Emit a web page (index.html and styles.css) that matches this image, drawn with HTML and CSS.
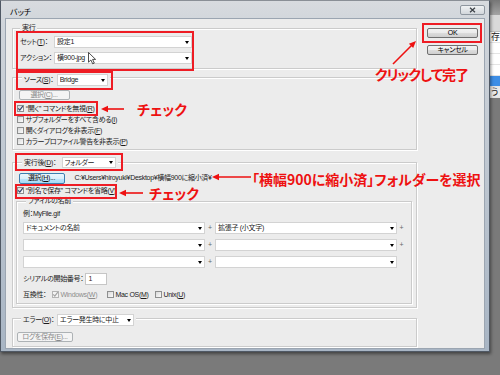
FILE: index.html
```html
<!DOCTYPE html>
<html lang="ja">
<head>
<meta charset="utf-8">
<title>バッチ</title>
<link rel="stylesheet" href="styles.css">
</head>
<body>
<div class="backapp">
  <div class="ba-top"></div>
  <div class="ba-bar"></div>
  <div class="ba-row ba-txt">存</div>
  <div class="ba-row"></div>
  <div class="ba-row"></div>
  <div class="ba-row"></div>
  <div class="ba-row ba-sel"></div>
  <div class="ba-row ba-txt ba-ico">う</div>
</div>

<div class="window">
  <div class="titlebar">
    <span class="title">バッチ</span>
    <span class="close-btn"><svg width="7" height="6" viewBox="0 0 7 6"><path d="M1 0.8 L6 5.2 M6 0.8 L1 5.2" stroke="#3d4248" stroke-width="1.3" fill="none"/></svg></span>
  </div>
  <div class="client">
    <div class="main-col">
      <fieldset class="group g-run">
        <legend class="lg-text">実行</legend>
        <div class="frow">
          <span class="flabel w-run">セット(<u>T</u>)：</span>
          <span class="select s-run"><span class="val">設定1</span><i class="arr"></i></span>
        </div>
        <div class="frow">
          <span class="flabel w-run">アクション：</span>
          <span class="select s-run"><span class="val">横900-jpg</span><i class="arr"></i></span>
        </div>
      </fieldset>

      <fieldset class="group g-src">
        <legend class="lg-ctrl lg-src">
          <span class="flabel w-src">ソース(<u>S</u>)：</span>
          <span class="select s-src"><span class="val">Bridge</span><i class="arr"></i></span>
        </legend>
        <span class="btn disabled b-choose1">選択(<u>C</u>)...</span>
        <div class="cb-list">
          <div class="cb-row"><span class="cb"><svg class="chk" viewBox="0 0 7 7"><path d="M1.2 3.4 L2.8 5.1 L5.8 1.2"/></svg></span><span>“開く” コマンドを無視(<u>R</u>)</span></div>
          <div class="cb-row"><span class="cb"></span><span>サブフォルダーをすべて含める(<u>I</u>)</span></div>
          <div class="cb-row"><span class="cb"></span><span>開くダイアログを非表示(<u>F</u>)</span></div>
          <div class="cb-row"><span class="cb"></span><span>カラープロファイル警告を非表示(<u>P</u>)</span></div>
        </div>
      </fieldset>

      <fieldset class="group g-after">
        <legend class="lg-ctrl lg-after">
          <span class="flabel w-after">実行後(<u>D</u>)：</span>
          <span class="select s-after"><span class="val">フォルダー</span><i class="arr"></i></span>
        </legend>
        <div class="path-row">
          <span class="btn hot b-choose2">選択(<u>H</u>)...</span>
          <span class="path">C:¥Users¥hiroyuki¥Desktop¥横幅900に縮小済¥</span>
        </div>
        <div class="cb-row cb-saveas"><span class="cb"><svg class="chk" viewBox="0 0 7 7"><path d="M1.2 3.4 L2.8 5.1 L5.8 1.2"/></svg></span><span>“別名で保存” コマンドを省略(<u>V</u>)</span></div>

        <fieldset class="group g-name">
          <legend class="lg-name">ファイルの名前</legend>
          <div class="example">例：MyFile.gif</div>
          <div class="name-row">
            <span class="select s-name"><span class="val">ドキュメントの名前</span><i class="arr"></i></span>
            <span class="plus">+</span>
            <span class="select s-name"><span class="val">拡張子 (小文字)</span><i class="arr"></i></span>
            <span class="plus">+</span>
          </div>
          <div class="name-row">
            <span class="select s-name"><span class="val"></span><i class="arr"></i></span>
            <span class="plus">+</span>
            <span class="select s-name"><span class="val"></span><i class="arr"></i></span>
            <span class="plus">+</span>
          </div>
          <div class="name-row">
            <span class="select s-name"><span class="val"></span><i class="arr"></i></span>
            <span class="plus">+</span>
            <span class="select s-name"><span class="val"></span><i class="arr"></i></span>
            <span class="plus"></span>
          </div>
          <div class="serial-row">
            <span class="flabel w-serial">シリアルの開始番号：</span>
            <span class="tinput">1</span>
          </div>
          <div class="compat-row">
            <span class="flabel w-compat">互換性：</span>
            <span class="citem c-win disabled"><span class="cb"><svg class="chk" viewBox="0 0 7 7"><path d="M1.2 3.4 L2.8 5.1 L5.8 1.2"/></svg></span><span>Windows(<u>W</u>)</span></span>
            <span class="citem c-mac"><span class="cb"></span><span>Mac OS(<u>M</u>)</span></span>
            <span class="citem"><span class="cb"></span><span>Unix(<u>U</u>)</span></span>
          </div>
        </fieldset>
      </fieldset>

      <fieldset class="group g-err">
        <legend class="lg-ctrl lg-err">
          <span class="flabel w-err">エラー(<u>O</u>)：</span>
          <span class="select s-err"><span class="val">エラー発生時に中止</span><i class="arr"></i></span>
        </legend>
        <span class="btn disabled b-log">ログを保存(<u>E</u>)...</span>
      </fieldset>
    </div>

    <div class="side-col">
      <span class="btn b-side b-ok">OK</span>
      <span class="btn b-side">キャンセル</span>
    </div>
  </div>
</div>

<div class="annot">
  <div class="rbox rb-a"></div>
  <div class="rbox rb-b"></div>
  <div class="rbox rb-c"></div>
  <div class="rbox rb-d"></div>
  <div class="rbox rb-e"></div>
  <div class="rbox rb-f"></div>
  <svg class="arrows" width="500" height="375" viewBox="0 0 500 375">
    <g stroke="#ee1111" stroke-width="1.6" fill="none">
      <line x1="124" y1="109" x2="107" y2="109"/>
      <line x1="143" y1="193" x2="125" y2="193"/>
      <line x1="251" y1="177" x2="218" y2="177"/>
      <line x1="393" y1="64" x2="412" y2="45"/>
    </g>
    <g fill="#ee1111">
      <polygon points="101,109 108,105.8 108,112.2"/>
      <polygon points="119,193 126,189.8 126,196.2"/>
      <polygon points="212,177 219,173.8 219,180.2"/>
      <polygon points="416,41 413.2,48.1 408.9,43.8"/>
    </g>
  </svg>
  <span class="rtext rt-1">チェック</span>
  <span class="rtext rt-2">「横幅900に縮小済」フォルダーを選択</span>
  <span class="rtext rt-3">チェック</span>
  <span class="rtext rt-4">クリックして完了</span>
  <svg class="cursor" width="9" height="13" viewBox="0 0 9 13"><path d="M0.5 0.5 L0.5 10.2 L2.9 8 L4.7 11.8 L6.3 11.1 L4.6 7.4 L7.6 7.4 Z" fill="#fff" stroke="#222" stroke-width="0.8" stroke-linejoin="round"/></svg>
</div>
</body>
</html>
```

FILE: styles.css
```css
* { box-sizing: border-box; }
html, body { margin: 0; padding: 0; }
body {
  width: 500px; height: 375px; overflow: hidden; position: relative;
  background: #7a7a7a;
  font-family: "Liberation Sans", "Noto Sans CJK JP", sans-serif;
  font-size: 7px; line-height: 10px; color: #1b1b1b;
  font-feature-settings: "palt";
  letter-spacing: -0.3px;
}
u { text-decoration: underline; text-underline-offset: 1px; }

/* background application sliver */
.backapp { position: absolute; left: 488px; top: 0; width: 12px; height: 98px; display: flex; flex-direction: column; background: #fff; }
.ba-top { height: 15px; background: linear-gradient(#767676, #a4a4a4); }
.ba-bar { height: 17px; background: #d9d9d9; border-bottom: 1px solid #bdbdbd; }
.ba-row { height: 11px; border-bottom: 1px solid #e4e4e4; }
.ba-txt { font-size: 9px; line-height: 10px; padding-left: 3px; color: #222; }
.ba-sel { background: #3d8ee6; }
.ba-ico { background: #e9e9e9; }

/* window */
.window {
  position: absolute; left: 0; top: 0; width: 490px; height: 352px;
  display: flex; flex-direction: column;
  padding: 0 4px 2px;
  border: 1px solid #4f5864; border-top-color: #8a8f96;
  background: linear-gradient(#d8dbdf 0, #d0d5db 24px, #a8b5c4 100%);
  box-shadow: 1px 2px 3px rgba(0, 0, 0, .45);
}
.titlebar { height: 17px; flex: none; display: flex; justify-content: space-between; align-items: flex-start; }
.title { margin: 8px 0 0 5px; font-size: 8px; line-height: 8px; color: #000; letter-spacing: 0; }
.close-btn {
  margin-top: 4px; width: 25px; height: 10px;
  border: 1px solid #8e969f; border-radius: 2px;
  background: linear-gradient(#f0f2f4, #d2d6db);
  display: flex; align-items: center; justify-content: center;
}
.client {
  flex: 1; display: flex; align-items: flex-start;
  background: #ececec; border: 1px solid #9ba5b1;
  padding: 4px 6px 0 6px;
}
.main-col { width: 405px; flex: none; display: flex; flex-direction: column; }
.side-col { width: 51px; margin-left: 10px; padding-top: 5px; display: flex; flex-direction: column; gap: 7px; }

/* groups */
.group {
  margin: 0; min-width: 0;
  border: 1px solid #cbcbcb;
  box-shadow: inset 1px 1px 0 #fff, 1px 1px 0 #fff;
}
legend { padding: 0 2px; background: #ececec; }
.lg-ctrl { display: flex; align-items: center; }
.lg-text { line-height: 10px; height: 10px; }

.frow { display: flex; align-items: center; height: 12px; }
.frow + .frow { margin-top: 4px; }
.flabel { flex: none; white-space: nowrap; }

.select {
  display: flex; align-items: center; flex: none;
  background: #fff; border: 1px solid #d3d3d3;
  height: 12px; padding: 0 2px 0 2px;
}
.select .val { flex: 1; white-space: nowrap; overflow: hidden; }
.arr { flex: none; width: 0; height: 0; border-left: 2.5px solid transparent; border-right: 2.5px solid transparent; border-top: 3px solid #000; }

/* group 1 */
.g-run { padding: 3px 7px 4px 7px; }
.w-run { width: 34px; }
.s-run { width: 138px; }

/* group 2 */
.g-src { padding: 4px 4px 2px 4px; }
.lg-src { margin-left: 5px; padding: 5px 2px 0; }
.w-src { width: 32.7px; }
.s-src { width: 51px; }

.btn {
  display: flex; align-items: center; justify-content: center; flex: none;
  border: 1px solid #707070; border-radius: 2px;
  background: linear-gradient(#f2f2f2 0, #ebebeb 50%, #dddddd 50%, #cfcfcf 100%);
  line-height: 8px; color: #111; white-space: nowrap;
}
.btn.disabled { border-color: #adb2b5; background: #f4f4f4; color: #8a8a8a; }
.btn.hot { border-color: #3c7fb1; background: linear-gradient(#eaf6fd 0, #d9f0fc 50%, #bee6fd 50%, #a7d9f5 100%); }
.b-choose1 { width: 51px; height: 10px; margin-left: 1.5px; align-self: flex-start; }

.cb-list { margin-top: 3px; display: flex; flex-direction: column; }
.cb-row { display: flex; align-items: center; height: 11px; gap: 1.7px; white-space: nowrap; }
.cb {
  flex: none; width: 7px; height: 7px;
  border: 1px solid #8e8f8f;
  background: linear-gradient(135deg, #d9d9d9, #fcfcfc);
  display: flex; align-items: center; justify-content: center;
}
.chk { width: 7px; height: 7px; flex: none; }
.chk path { fill: none; stroke: #34466f; stroke-width: 1.2; }

/* group 3 */
.g-after { margin-top: 7px; padding: 4px 4px 3px 3px; }
.lg-after { margin-left: 6px; }
.w-after { width: 37.5px; }
.s-after { width: 54px; height: 11px; }
.path-row { display: flex; align-items: center; height: 12px; }
.b-choose2 { width: 46px; height: 11px; margin-left: 2.5px; }
.path { margin-left: 10px; white-space: nowrap; }
.cb-saveas { height: 13px; margin-left: 1px; }

.g-name { padding: 4px 5px 3.5px 6px; }
.lg-name { line-height: 8px; margin-left: 3px; }
.example { height: 10px; }
.name-row { display: flex; align-items: center; height: 12px; margin-top: 5px; }
.example + .name-row { margin-top: 3px; }
.s-name { width: 182px; }
.plus { width: 10px; text-align: center; color: #666; flex: none; }
.name-row .plus:last-child { width: 9px; }
.serial-row { display: flex; align-items: center; height: 12px; margin-top: 5px; }
.w-serial { width: 62px; }
.tinput { width: 22px; height: 12px; background: #fff; border: 1px solid #c6c6c6; padding-left: 2.5px; color: #3a2424; }
.compat-row { display: flex; align-items: center; height: 10px; margin-top: 4.5px; }
.w-compat { width: 29px; }
.citem { display: flex; align-items: center; gap: 1.5px; white-space: nowrap; }
.c-win { width: 55px; }
.c-mac { width: 48px; }
.citem.disabled { color: #8d8d8d; }
.citem.disabled .cb { border-color: #b4b4b4; background: #f4f4f4; }
.citem.disabled .chk path { stroke: #a3a3a3; }

/* group 4 */
.g-err { margin-top: 2px; padding: 5.5px 4px 4px 4px; }
.lg-err { margin-left: 4px; padding: 4px 2px 0; }
.w-err { width: 34px; }
.s-err { width: 77px; }
.b-log { width: 56px; height: 10px; align-self: flex-start; }

/* side buttons */
.b-side { height: 10px; width: 51px; color: #000; }

/* annotations */
.annot { position: absolute; left: 0; top: 0; width: 500px; height: 375px; pointer-events: none; }
.rbox { position: absolute; border: 2px solid #ee1c24; }
.rb-a { left: 16px; top: 31px; width: 178px; height: 40px; }
.rb-b { left: 16px; top: 71px; width: 97px; height: 19px; }
.rb-c { left: 14px; top: 101px; width: 84px; height: 15px; }
.rb-d { left: 15px; top: 153px; width: 108px; height: 18px; }
.rb-e { left: 15px; top: 184px; width: 102px; height: 15px; }
.rb-f { left: 422px; top: 23px; width: 60px; height: 20px; }
.arrows { position: absolute; left: 0; top: 0; }
.rtext {
  position: absolute; color: #ee1111; font-weight: 700;
  font-family: "Noto Sans CJK JP", sans-serif;
  font-size: 14px; line-height: 14px; letter-spacing: 0; white-space: nowrap;
}
.rt-1 { left: 137px; top: 102px; }
.rt-2 { left: 252px; top: 172px; }
.rt-3 { left: 149px; top: 185.5px; }
.rt-4 { left: 375px; top: 67px; letter-spacing: -1px; }
.cursor { position: absolute; left: 88px; top: 52px; }
```
